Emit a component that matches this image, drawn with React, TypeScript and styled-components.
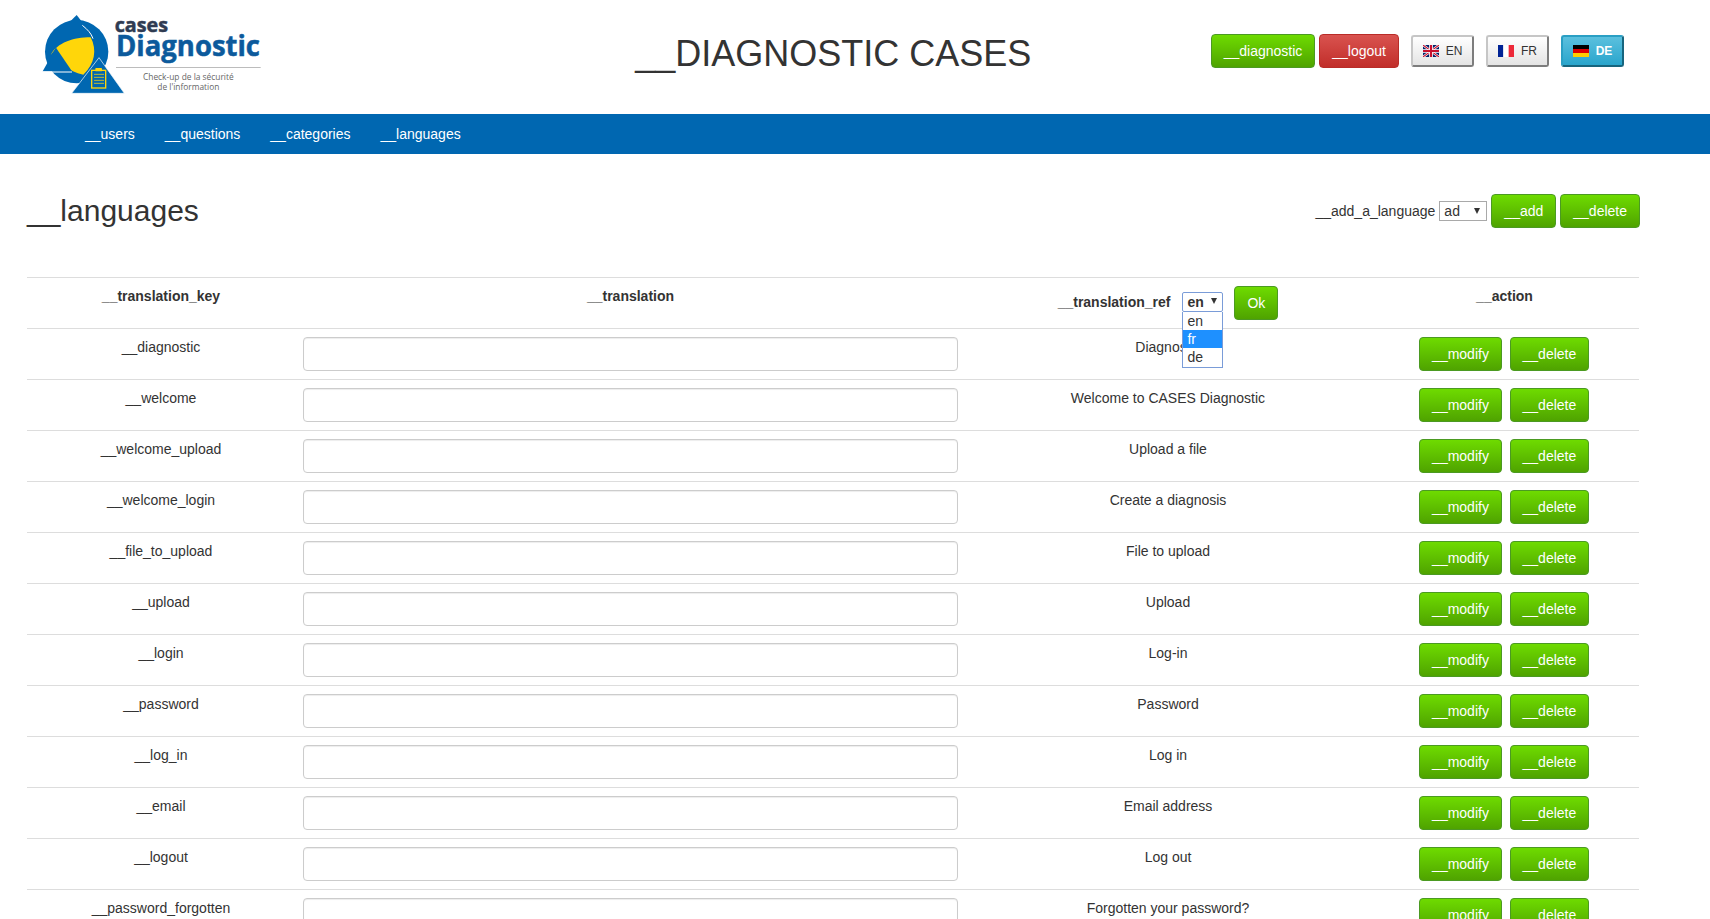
import React from "react";
import styled, { createGlobalStyle, css } from "styled-components";

const GlobalStyle = createGlobalStyle`
  html, body {
    margin: 0;
    height: 919px;
    overflow: hidden;
    background: #fff;
  }
  body {
    font-family: "Liberation Sans", Arial, sans-serif;
    font-size: 14px;
    line-height: 20px;
    color: #333;
  }
  * {
    box-sizing: border-box;
  }
`;

const Header = styled.header`
  display: flex;
  align-items: center;
  height: 114px;
  padding: 0 86px 0 30px;
`;

const Logo = styled.svg`
  display: block;
  width: 240px;
  height: 95px;
  margin-top: -9px;
  flex: none;
`;

const Title = styled.h1`
  flex: 1;
  margin: 0;
  padding-left: 186px;
  padding-bottom: 6px;
  font-size: 36px;
  line-height: 40px;
  font-weight: 400;
  text-align: center;
  white-space: nowrap;
`;

const HeaderActions = styled.div`
  display: flex;
  align-items: center;
  gap: 4px;
  margin-top: -13px;
`;

const Button = styled.button<{ $variant?: "green" | "red" }>`
  height: 34px;
  padding: 6px 12px;
  border: 1px solid #4b9a22;
  border-radius: 4px;
  font-family: inherit;
  font-size: 14px;
  line-height: 20px;
  color: #fff;
  white-space: nowrap;
  background: linear-gradient(#6edb00, #4fa300);
  ${(p) =>
    p.$variant === "red" &&
    css`
      border-color: #b92c28;
      background: linear-gradient(#d9534f, #c12e2a);
    `}
`;

const LangGroup = styled.div`
  display: flex;
  gap: 12px;
  margin-left: 8px;
`;

const LangButton = styled.button<{ $active?: boolean }>`
  display: flex;
  align-items: center;
  justify-content: center;
  gap: 7px;
  width: 63px;
  height: 32px;
  padding: 0;
  border: 2px solid #c6c6c6;
  border-right-color: #7d7d7d;
  border-bottom-color: #7d7d7d;
  border-radius: 3px;
  font-family: inherit;
  font-size: 12px;
  color: #333;
  background: linear-gradient(#fff, #e4e4e4);
  ${(p) =>
    p.$active &&
    css`
      border-color: #2a9fc4;
      border-right-color: #17657e;
      border-bottom-color: #17657e;
      font-weight: 700;
      color: #fff;
      background: linear-gradient(#5bc0de, #2aa5cc);
    `}
`;

const Flag = styled.svg`
  display: block;
  width: 16px;
  height: 12px;
  flex: none;
`;

const Nav = styled.nav`
  display: flex;
  align-items: center;
  gap: 30px;
  height: 40px;
  padding-left: 85px;
  background: #0067b1;
`;

const NavLink = styled.a`
  color: #fff;
  font-size: 14px;
  text-decoration: none;
`;

const Main = styled.main`
  padding: 40px 70px 0 27px;
`;

const Toolbar = styled.div`
  display: flex;
  align-items: center;
  justify-content: space-between;
  height: 34px;
  margin-bottom: 49px;
`;

const PageTitle = styled.h2`
  margin: 0 0 2px;
  font-size: 30px;
  line-height: 33px;
  font-weight: 400;
`;

const ToolbarActions = styled.div`
  display: flex;
  align-items: center;
  gap: 4px;
`;

const SelectBox = styled.span`
  position: relative;
  display: inline-block;
  flex: none;

  &::after {
    content: "";
    position: absolute;
    top: 7px;
    right: 7px;
    border-left: 3.5px solid transparent;
    border-right: 3.5px solid transparent;
    border-top: 6px solid #333;
    pointer-events: none;
  }
`;

const RefSelectBox = styled(SelectBox)`
  margin-bottom: 2px;
  text-align: left;

  &::after {
    top: 6px;
    right: 6px;
  }
`;

const Select = styled.select<{ $focused?: boolean; $width: number }>`
  display: block;
  appearance: none;
  width: ${(p) => p.$width}px;
  height: 20px;
  padding: 0 0 0 4px;
  border: 1px solid #a9a9a9;
  border-radius: 0;
  outline: none;
  background: #fff;
  font-family: inherit;
  font-size: 14px;
  font-weight: inherit;
  color: #333;
  ${(p) =>
    p.$focused &&
    css`
      border: 1px solid #7a9cd8;
      border-radius: 2px;
    `}
`;

const DropdownList = styled.ul`
  position: absolute;
  top: 20px;
  left: 0;
  z-index: 2;
  width: 41px;
  margin: 0;
  padding: 0 0 1px;
  list-style: none;
  background: #fff;
  border: 1px solid #7a9cd8;
  border-top: none;
`;

const DropdownItem = styled.li<{ $selected?: boolean }>`
  height: 18px;
  padding-left: 4px;
  font-size: 14px;
  font-weight: 400;
  line-height: 18px;
  ${(p) =>
    p.$selected &&
    css`
      background: #1e90ff;
      color: #fff;
    `}
`;

const Table = styled.table`
  width: 1612px;
  border-collapse: collapse;
  table-layout: fixed;
`;

const HeadCell = styled.th<{ $width: number }>`
  width: ${(p) => p.$width}px;
  height: 51px;
  padding: 8px;
  border-top: 1px solid #ddd;
  text-align: center;
  vertical-align: top;
  font-weight: 700;
`;

const Cell = styled.td`
  height: 51px;
  padding: 8px;
  border-top: 1px solid #ddd;
  text-align: center;
  vertical-align: top;
`;

const RefHead = styled.div`
  display: flex;
  align-items: center;
  justify-content: center;
`;

const RefLabel = styled.span`
  margin: 0 12px 2px 0;
`;

const OkButton = styled(Button)`
  margin-left: 11px;
`;

const TextInput = styled.input`
  display: block;
  width: 100%;
  height: 34px;
  padding: 6px 12px;
  border: 1px solid #ccc;
  border-radius: 4px;
  background: #fff;
  box-shadow: inset 0 1px 1px rgba(0, 0, 0, 0.075);
`;

const RowActions = styled.div`
  display: flex;
  justify-content: center;
  gap: 8px;
  padding-right: 1px;
`;

const RowDelete = styled(Button)`
  width: 79px;
  padding: 6px 0;
`;

const rows: [string, string][] = [
  ["__diagnostic", "Diagnostic"],
  ["__welcome", "Welcome to CASES Diagnostic"],
  ["__welcome_upload", "Upload a file"],
  ["__welcome_login", "Create a diagnosis"],
  ["__file_to_upload", "File to upload"],
  ["__upload", "Upload"],
  ["__login", "Log-in"],
  ["__password", "Password"],
  ["__log_in", "Log in"],
  ["__email", "Email address"],
  ["__logout", "Log out"],
  ["__password_forgotten", "Forgotten your password?"],
];

const CasesLogo = () => (
  <Logo viewBox="90 15 720 285" aria-label="cases Diagnostic">
    <circle cx="230" cy="155" r="95" fill="#0067b1" />
    <path d="M230 45 L282 112 L190 85 Z" fill="#0067b1" />
    <path d="M152 165 C172 128 220 112 272 112 C292 150 284 192 250 224 C205 215 175 190 168 145 Z" fill="#ffd60a" />
    <path d="M247 76 C262 88 274 100 279 116" fill="none" stroke="#fff" strokeWidth="3" />
    <path d="M168 143 L128 214 L216 214 Z" fill="#0067b1" />
    <path d="M128 216 H216" stroke="#fff" strokeWidth="3" />
    <path d="M297 173 L215 280 L373 280 Z" fill="#0067b1" stroke="#fff" strokeWidth="2" />
    <rect x="275" y="211" width="42" height="53" fill="none" stroke="#ffd60a" strokeWidth="4" />
    <rect x="286" y="204" width="20" height="10" rx="2" fill="#ffd60a" />
    <path d="M282 223h30M282 232h30M282 241h30M282 250h30" stroke="#ffd60a" strokeWidth="3" opacity="0.75" />
    <text x="344" y="97" fontFamily="'Open Sans', sans-serif" fontWeight="700" fontSize="58" fill="#2f3b52" stroke="#2f3b52" strokeWidth="1.5" textLength="160" lengthAdjust="spacingAndGlyphs">cases</text>
    <text x="348" y="168" fontFamily="'Open Sans', sans-serif" fontWeight="700" fontSize="84" fill="#0c5a9c" stroke="#0c5a9c" strokeWidth="1.5" textLength="432" lengthAdjust="spacingAndGlyphs">Diagnostic</text>
    <rect x="348" y="201" width="434" height="3" fill="#bcbcbc" />
    <text x="565" y="241" textAnchor="middle" fontFamily="'Open Sans', sans-serif" fontSize="25" fill="#666" textLength="272" lengthAdjust="spacingAndGlyphs">Check-up de la sécurité</text>
    <text x="565" y="270" textAnchor="middle" fontFamily="'Open Sans', sans-serif" fontSize="25" fill="#666" textLength="186" lengthAdjust="spacingAndGlyphs">de l'information</text>
  </Logo>
);

const FlagEn = () => (
  <Flag viewBox="0 0 60 45" preserveAspectRatio="none">
    <rect width="60" height="45" fill="#012169" />
    <path d="M0 0L60 45M60 0L0 45" stroke="#fff" strokeWidth="9" />
    <path d="M0 0L60 45M60 0L0 45" stroke="#c8102e" strokeWidth="4" />
    <path d="M30 0V45M0 22.5H60" stroke="#fff" strokeWidth="14" />
    <path d="M30 0V45M0 22.5H60" stroke="#c8102e" strokeWidth="8" />
  </Flag>
);

const FlagFr = () => (
  <Flag viewBox="0 0 3 2" preserveAspectRatio="none">
    <rect width="1" height="2" fill="#002395" />
    <rect x="1" width="1" height="2" fill="#fff" />
    <rect x="2" width="1" height="2" fill="#ed2939" />
  </Flag>
);

const FlagDe = () => (
  <Flag viewBox="0 0 3 3" preserveAspectRatio="none">
    <rect width="3" height="1" fill="#000" />
    <rect y="1" width="3" height="1" fill="#dd0000" />
    <rect y="2" width="3" height="1" fill="#ffce00" />
  </Flag>
);

const App: React.FC = () => {
  return (
    <>
      <GlobalStyle />
      <Header>
        <CasesLogo />
        <Title>__DIAGNOSTIC CASES</Title>
        <HeaderActions>
          <Button>__diagnostic</Button>
          <Button $variant="red">__logout</Button>
          <LangGroup>
            <LangButton>
              <FlagEn />
              EN
            </LangButton>
            <LangButton>
              <FlagFr />
              FR
            </LangButton>
            <LangButton $active>
              <FlagDe />
              DE
            </LangButton>
          </LangGroup>
        </HeaderActions>
      </Header>
      <Nav>
        <NavLink href="#">__users</NavLink>
        <NavLink href="#">__questions</NavLink>
        <NavLink href="#">__categories</NavLink>
        <NavLink href="#">__languages</NavLink>
      </Nav>
      <Main>
        <Toolbar>
          <PageTitle>__languages</PageTitle>
          <ToolbarActions>
            <span>__add_a_language</span>
            <SelectBox>
              <Select $width={48} defaultValue="ad">
                <option value="ad">ad</option>
              </Select>
            </SelectBox>
            <Button>__add</Button>
            <Button>__delete</Button>
          </ToolbarActions>
        </Toolbar>
        <Table>
          <thead>
            <tr>
              <HeadCell $width={268}>__translation_key</HeadCell>
              <HeadCell $width={671}>__translation</HeadCell>
              <HeadCell $width={404}>
                <RefHead>
                  <RefLabel>__translation_ref</RefLabel>
                  <RefSelectBox>
                    <Select $width={41} $focused defaultValue="en">
                      <option value="en">en</option>
                      <option value="fr">fr</option>
                      <option value="de">de</option>
                    </Select>
                    <DropdownList>
                      <DropdownItem>en</DropdownItem>
                      <DropdownItem $selected>fr</DropdownItem>
                      <DropdownItem>de</DropdownItem>
                    </DropdownList>
                  </RefSelectBox>
                  <OkButton>Ok</OkButton>
                </RefHead>
              </HeadCell>
              <HeadCell $width={269}>__action</HeadCell>
            </tr>
          </thead>
          <tbody>
            {rows.map(([key, ref]) => (
              <tr key={key}>
                <Cell>{key}</Cell>
                <Cell>
                  <TextInput type="text" />
                </Cell>
                <Cell>{ref}</Cell>
                <Cell>
                  <RowActions>
                    <Button>__modify</Button>
                    <RowDelete>__delete</RowDelete>
                  </RowActions>
                </Cell>
              </tr>
            ))}
          </tbody>
        </Table>
      </Main>
    </>
  );
};

export default App;
